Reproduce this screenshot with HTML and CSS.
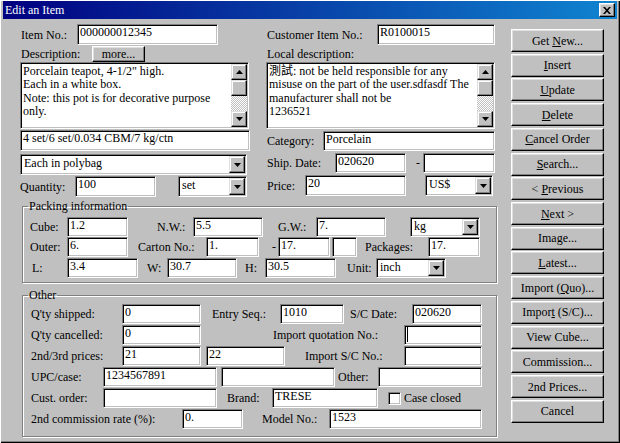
FILE: index.html
```html
<!DOCTYPE html>
<html lang="zh-Hant">
<head>
    <meta charset="UTF-8">
    <meta name="viewport" content="width=device-width, initial-scale=1.0">
    <title>Edit an Item</title>
    <link rel="stylesheet" href="styles.css">
</head>
<body>
    <div class="window">
        <div class="titlebar">
            <span class="title">Edit an Item</span>
            <button class="close" aria-label="Close">
                <svg width="8" height="7" viewBox="0 0 8 7"><path d="M0 0h2l2 2.2L6 0h2L5 3.5 8 7H6L4 4.8 2 7H0l3-3.5z"/></svg>
            </button>
        </div>
        <div class="dialog">
            <div class="form">
                <div class="top">
                    <div class="col">
                        <div class="row row-tall">
                            <span class="lbl w-57 pl-1">Item No.:</span>
                            <div class="field w-141">000000012345</div>
                        </div>
                        <div class="row row-short mt-1">
                            <span class="lbl w-72 pl-1">Description:</span>
                            <button class="btn btn-more">more...</button>
                        </div>
                        <div class="memo">
                            <div class="memo-text">Porcelain teapot, 4-1/2" high.<br>Each in a white box.<br>Note: this pot is for decorative purpose<br>only.</div>
                            <div class="scrollbar">
                                <span class="sb-btn"><svg width="7" height="4" viewBox="0 0 7 4"><path d="M3.5 0L7 4H0z"/></svg></span>
                                <span class="sb-thumb"></span>
                                <span class="sb-track"></span>
                                <span class="sb-btn"><svg width="7" height="4" viewBox="0 0 7 4"><path d="M0 0h7L3.5 4z"/></svg></span>
                            </div>
                        </div>
                        <div class="field field-tall w-230 mt-1">4 set/6 set/0.034 CBM/7 kg/ctn</div>
                        <div class="combo combo-tall w-227 mt-3">
                            <span class="combo-text">Each in polybag</span>
                            <span class="drop"><svg width="7" height="4" viewBox="0 0 7 4"><path d="M0 0h7L3.5 4z"/></svg></span>
                        </div>
                        <div class="row row-tall mt-1">
                            <span class="lbl w-55">Quantity:</span>
                            <div class="field w-81">100</div>
                            <span class="sp w-22"></span>
                            <div class="combo w-69">
                                <span class="combo-text">set</span>
                                <span class="drop"><svg width="7" height="4" viewBox="0 0 7 4"><path d="M0 0h7L3.5 4z"/></svg></span>
                            </div>
                        </div>
                    </div>

                    <div class="col col-right">
                        <div class="row row-tall">
                            <span class="lbl w-111 pl-1">Customer Item No.:</span>
                            <div class="field w-118">R0100015</div>
                        </div>
                        <div class="row row-short mt-1">
                            <span class="lbl pl-1">Local description:</span>
                        </div>
                        <div class="memo">
                            <div class="memo-text">測試: not be held responsible for any<br>misuse on the part of the user.sdfasdf The<br>manufacturer shall not be<br>1236521</div>
                            <div class="scrollbar">
                                <span class="sb-btn"><svg width="7" height="4" viewBox="0 0 7 4"><path d="M3.5 0L7 4H0z"/></svg></span>
                                <span class="sb-thumb"></span>
                                <span class="sb-track"></span>
                                <span class="sb-btn"><svg width="7" height="4" viewBox="0 0 7 4"><path d="M0 0h7L3.5 4z"/></svg></span>
                            </div>
                        </div>
                        <div class="row mt-2">
                            <span class="lbl w-57 pl-1">Category:</span>
                            <div class="field w-172">Porcelain</div>
                        </div>
                        <div class="row mt-2">
                            <span class="lbl w-69 pl-1">Ship. Date:</span>
                            <div class="field w-71">020620</div>
                            <span class="lbl w-17 pl-10">-</span>
                            <div class="field w-72"></div>
                        </div>
                        <div class="row row-tall mt-2">
                            <span class="lbl w-39 pl-1">Price:</span>
                            <div class="field w-101">20</div>
                            <span class="sp w-19"></span>
                            <div class="combo w-68">
                                <span class="combo-text">US$</span>
                                <span class="drop"><svg width="7" height="4" viewBox="0 0 7 4"><path d="M0 0h7L3.5 4z"/></svg></span>
                            </div>
                        </div>
                    </div>
                </div>

                <fieldset class="group group-packing">
                    <legend>Packing information</legend>
                    <div class="row">
                        <span class="lbl w-37">Cube:</span>
                        <div class="field w-61">1.2</div>
                        <span class="lbl w-65 pl-29">N.W.:</span>
                        <div class="field w-70">5.5</div>
                        <span class="lbl w-53 pl-15">G.W.:</span>
                        <div class="field w-70">7.</div>
                        <span class="sp w-24"></span>
                        <div class="combo w-70">
                            <span class="combo-text">kg</span>
                            <span class="drop"><svg width="7" height="4" viewBox="0 0 7 4"><path d="M0 0h7L3.5 4z"/></svg></span>
                        </div>
                    </div>
                    <div class="row">
                        <span class="lbl w-37">Outer:</span>
                        <div class="field w-61">6.</div>
                        <span class="lbl w-78 pl-10">Carton No.:</span>
                        <div class="field w-53">1.</div>
                        <span class="lbl w-19 pl-13">-</span>
                        <div class="field w-52">17.</div>
                        <span class="sp w-2"></span>
                        <div class="field w-25"></div>
                        <span class="lbl w-71 pl-8">Packages:</span>
                        <div class="field w-52">17.</div>
                    </div>
                    <div class="row mt-1">
                        <span class="lbl w-37 pl-2">L:</span>
                        <div class="field w-71">3.4</div>
                        <span class="lbl w-29 pl-9">W:</span>
                        <div class="field w-70">30.7</div>
                        <span class="lbl w-28 pl-8">H:</span>
                        <div class="field w-71">30.5</div>
                        <span class="lbl w-40 pl-11">Unit:</span>
                        <div class="combo w-70">
                            <span class="combo-text">inch</span>
                            <span class="drop"><svg width="7" height="4" viewBox="0 0 7 4"><path d="M0 0h7L3.5 4z"/></svg></span>
                        </div>
                    </div>
                </fieldset>

                <fieldset class="group group-other">
                    <legend>Other</legend>
                    <div class="row">
                        <span class="lbl w-92 pl-1">Q'ty shipped:</span>
                        <div class="field w-79">0</div>
                        <span class="lbl w-79 pl-11">Entry Seq.:</span>
                        <div class="field w-64">1010</div>
                        <span class="lbl w-68 pl-6">S/C Date:</span>
                        <div class="field w-70">020620</div>
                    </div>
                    <div class="row mt-1">
                        <span class="lbl w-92 pl-1">Q'ty cancelled:</span>
                        <div class="field w-79">0</div>
                        <span class="lbl w-203 pl-72">Import quotation No.:</span>
                        <div class="field w-78"><span class="caret"></span></div>
                    </div>
                    <div class="row mt-1">
                        <span class="lbl w-92 pl-1">2nd/3rd prices:</span>
                        <div class="field w-79">21</div>
                        <span class="sp w-5"></span>
                        <div class="field w-79">22</div>
                        <span class="lbl w-119 pl-20">Import S/C No.:</span>
                        <div class="field w-78"></div>
                    </div>
                    <div class="row mt-1">
                        <span class="lbl w-73 pl-1">UPC/case:</span>
                        <div class="field w-114">1234567891</div>
                        <span class="sp w-4"></span>
                        <div class="field w-114"></div>
                        <span class="lbl w-43 pl-3">Other:</span>
                        <div class="field w-104"></div>
                    </div>
                    <div class="row mt-1">
                        <span class="lbl w-73 pl-1">Cust. order:</span>
                        <div class="field w-114"></div>
                        <span class="lbl w-55 pl-10">Brand:</span>
                        <div class="field w-106">TRESE</div>
                        <span class="sp w-10"></span>
                        <span class="check"></span>
                        <span class="lbl pl-3">Case closed</span>
                    </div>
                    <div class="row mt-1">
                        <span class="lbl w-152 pl-1">2nd commission rate (%):</span>
                        <div class="field w-61">0.</div>
                        <span class="lbl w-86 pl-19">Model No.:</span>
                        <div class="field w-153">1523</div>
                    </div>
                </fieldset>
            </div>

            <div class="actions">
                <button class="btn">Get <u>N</u>ew...</button>
                <button class="btn"><u>I</u>nsert</button>
                <button class="btn"><u>U</u>pdate</button>
                <button class="btn"><u>D</u>elete</button>
                <button class="btn"><u>C</u>ancel Order</button>
                <button class="btn"><u>S</u>earch...</button>
                <button class="btn">&lt; <u>P</u>revious</button>
                <button class="btn"><u>N</u>ext &gt;</button>
                <button class="btn">Ima<u>g</u>e...</button>
                <button class="btn"><u>L</u>atest...</button>
                <button class="btn">Import (<u>Q</u>uo)...</button>
                <button class="btn">Impor<u>t</u> (S/C)...</button>
                <button class="btn">View Cube...</button>
                <button class="btn">Commission...</button>
                <button class="btn">2nd Prices...</button>
                <button class="btn">Cancel</button>
            </div>
        </div>
    </div>
</body>
</html>
```

FILE: styles.css
```css
* {
    box-sizing: border-box;
}
body {
    margin: 0;
    background: #c0c0c0;
    font: 12px/12px "Liberation Serif", "Noto Sans CJK TC", serif;
    color: #000;
}
button {
    font: inherit;
    color: inherit;
    padding: 0;
}
.window {
    width: 620px;
    height: 443px;
    padding: 1px 3px 3px 3px;
    background: #c0c0c0;
    box-shadow: inset 1px 1px #fff, inset -1px -1px #000, inset -2px -2px #808080;
    overflow: hidden;
}
.titlebar {
    display: flex;
    align-items: center;
    justify-content: space-between;
    height: 18px;
    padding: 0 2px;
    background: linear-gradient(90deg, #000080, #1084d0);
    color: #fff;
}
.close {
    display: flex;
    align-items: center;
    justify-content: center;
    width: 16px;
    height: 14px;
    background: #c0c0c0;
    border: 1px solid;
    border-color: #fff #000 #000 #fff;
    box-shadow: inset -1px -1px #808080, inset 1px 1px #dfdfdf;
}
.close svg,
.sb-btn svg,
.drop svg {
    fill: #000;
    display: block;
}

/* dialog body */
.dialog {
    display: flex;
    padding: 5px 0 0 17px;
}
.form {
    width: 477px;
}
.top {
    display: flex;
}
.col {
    width: 230px;
}
.col-right {
    width: 229px;
    margin-left: 16px;
}
.row {
    display: flex;
    align-items: center;
    height: 20px;
}
.row-tall {
    height: 21px;
}
.row-short {
    height: 16px;
}
.lbl {
    flex: none;
    white-space: nowrap;
}
.sp {
    flex: none;
}

/* sunken controls */
.field,
.combo,
.memo,
.check {
    flex: none;
    background: #fff;
    border: 1px solid;
    border-color: #808080 #fff #fff #808080;
    box-shadow: inset 1px 1px #000, inset -1px -1px #c0c0c0;
}
.field {
    height: 20px;
    padding: 1px 2px 0;
    white-space: nowrap;
    overflow: hidden;
}
.row-tall .field,
.field-tall {
    height: 21px;
}
.caret {
    display: inline-block;
    width: 1px;
    height: 15px;
    background: #000;
}
.combo {
    display: flex;
    height: 20px;
    padding: 1px;
}
.combo-tall,
.row-tall .combo {
    height: 21px;
}
.combo-text {
    flex: 1;
    padding: 1px 0 0 2px;
    white-space: nowrap;
}
.drop,
.sb-btn,
.sb-thumb {
    display: flex;
    align-items: center;
    justify-content: center;
    width: 16px;
    background: #c0c0c0;
    border: 1px solid;
    border-color: #dfdfdf #000 #000 #dfdfdf;
    box-shadow: inset -1px -1px #808080, inset 1px 1px #fff;
}
.drop {
    height: 100%;
}
.memo {
    display: flex;
    width: 229px;
    height: 67px;
    padding: 1px;
}
.memo-text {
    flex: 1;
    padding: 1px 0 0 1px;
    line-height: 13.3px;
    white-space: nowrap;
    overflow: hidden;
}
.scrollbar {
    display: flex;
    flex-direction: column;
    width: 16px;
}
.sb-btn,
.sb-thumb {
    height: 16px;
}
.sb-track {
    flex: 1;
    background: repeating-conic-gradient(#fff 0 25%, #c0c0c0 0 50%) 0 0 / 2px 2px;
}
.check {
    width: 13px;
    height: 13px;
}

/* group boxes */
.group {
    width: 475px;
    margin: 3px 0 0 2px;
    padding: 4px 0 4px 7px;
    border: 1px solid #808080;
    box-shadow: 1px 1px #fff, inset 1px 1px #fff;
    min-inline-size: 0;
}
.group legend {
    margin-left: -2px;
    padding: 0 1px;
    line-height: 13px;
}
.group-other {
    margin-top: 6px;
    padding: 2px 0 7px 7px;
}

/* buttons */
.btn {
    background: #c0c0c0;
    border: 1px solid;
    border-color: #fff #000 #000 #fff;
    box-shadow: inset -1px -1px #808080, inset 1px 1px #dfdfdf;
    white-space: nowrap;
}
.btn-more {
    width: 53px;
    height: 16px;
}
.actions {
    display: flex;
    flex-direction: column;
    justify-content: space-between;
    width: 93px;
    height: 394px;
    margin: 5px 0 0 14px;
}
.actions .btn {
    height: 23px;
}

/* spacing helpers */
.mt-1 { margin-top: 1px; }
.mt-2 { margin-top: 2px; }
.mt-3 { margin-top: 3px; }
.pl-1 { padding-left: 1px; }
.pl-2 { padding-left: 2px; }
.pl-3 { padding-left: 3px; }
.pl-6 { padding-left: 6px; }
.pl-8 { padding-left: 8px; }
.pl-9 { padding-left: 9px; }
.pl-10 { padding-left: 10px; }
.pl-11 { padding-left: 11px; }
.pl-13 { padding-left: 13px; }
.pl-15 { padding-left: 15px; }
.pl-19 { padding-left: 19px; }
.pl-20 { padding-left: 20px; }
.pl-29 { padding-left: 29px; }
.pl-72 { padding-left: 72px; }
.w-2 { width: 2px; }
.w-4 { width: 4px; }
.w-5 { width: 5px; }
.w-10 { width: 10px; }
.w-17 { width: 17px; }
.w-19 { width: 19px; }
.w-22 { width: 22px; }
.w-24 { width: 24px; }
.w-25 { width: 25px; }
.w-28 { width: 28px; }
.w-29 { width: 29px; }
.w-37 { width: 37px; }
.w-39 { width: 39px; }
.w-40 { width: 40px; }
.w-43 { width: 43px; }
.w-52 { width: 52px; }
.w-53 { width: 53px; }
.w-55 { width: 55px; }
.w-57 { width: 57px; }
.w-61 { width: 61px; }
.w-64 { width: 64px; }
.w-65 { width: 65px; }
.w-68 { width: 68px; }
.w-69 { width: 69px; }
.w-70 { width: 70px; }
.w-71 { width: 71px; }
.w-72 { width: 72px; }
.w-73 { width: 73px; }
.w-78 { width: 78px; }
.w-79 { width: 79px; }
.w-81 { width: 81px; }
.w-86 { width: 86px; }
.w-92 { width: 92px; }
.w-101 { width: 101px; }
.w-104 { width: 104px; }
.w-106 { width: 106px; }
.w-111 { width: 111px; }
.w-114 { width: 114px; }
.w-118 { width: 118px; }
.w-119 { width: 119px; }
.w-141 { width: 141px; }
.w-152 { width: 152px; }
.w-153 { width: 153px; }
.w-172 { width: 172px; }
.w-203 { width: 203px; }
.w-227 { width: 227px; }
.w-230 { width: 230px; }
```
